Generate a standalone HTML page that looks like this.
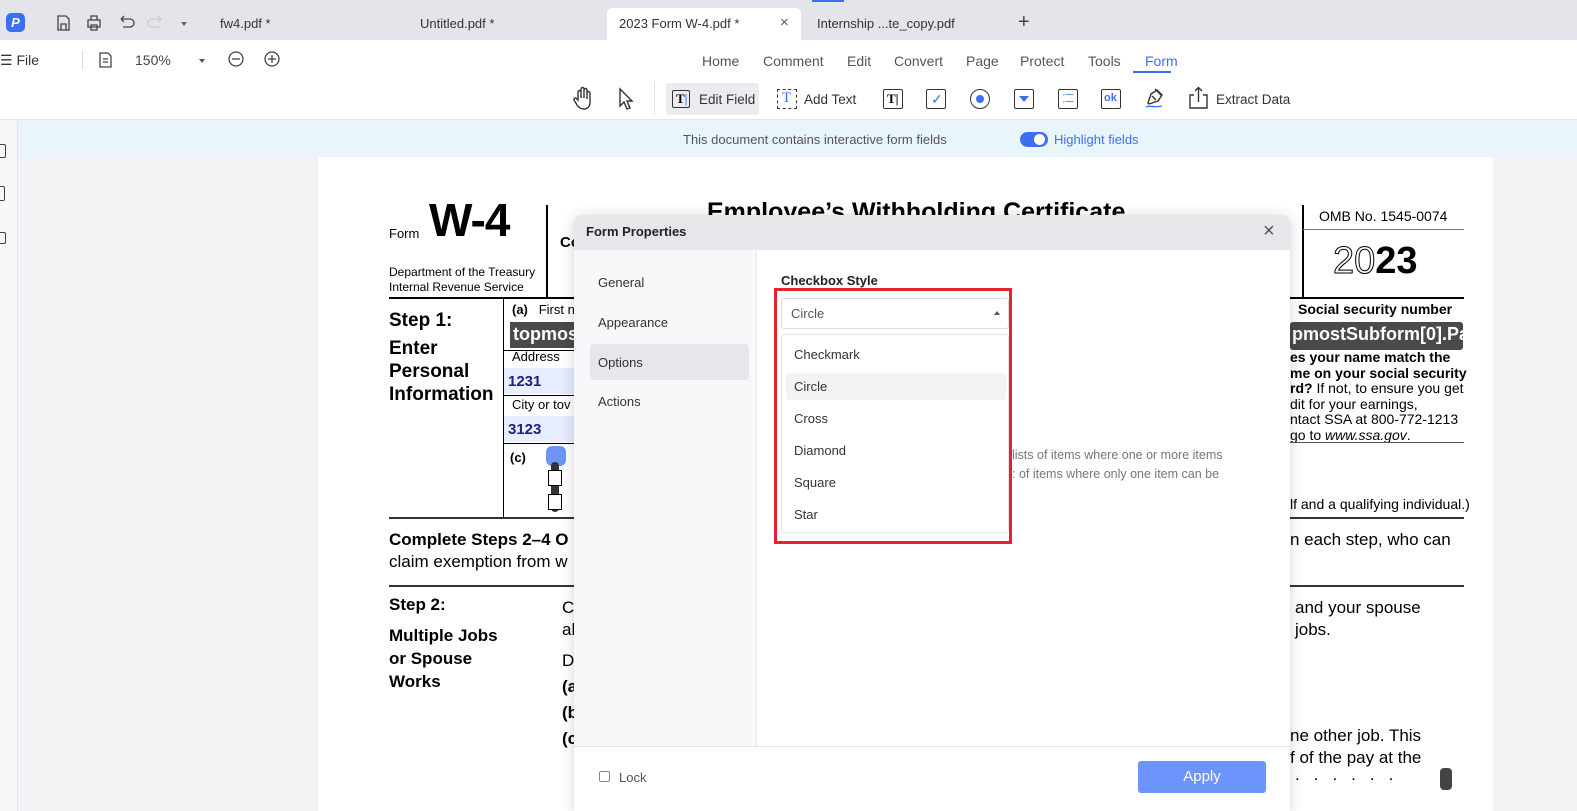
<!DOCTYPE html>
<html><head><meta charset="utf-8"><style>
*{margin:0;padding:0;box-sizing:border-box}
body{width:1577px;height:811px;overflow:hidden;position:relative;font-family:"Liberation Sans",sans-serif;background:#f2f3f5;color:#333}
.a{position:absolute}
.t{font-size:13px;color:#333;white-space:nowrap}
.pd{font-family:"Liberation Sans",sans-serif;color:#000;white-space:nowrap}
.ic{position:absolute;border:1.6px solid #333;border-radius:2px}
</style></head><body>
<!-- tab bar -->
<div class="a" style="left:0;top:0;width:1577px;height:40px;background:#e4e5ea"></div>
<div class="a" style="left:6px;top:13px;width:19px;height:19px;background:#3d6ff5;border-radius:5px;color:#fff;font-size:13px;font-style:italic;font-weight:bold;text-align:center;line-height:19px">P</div>
<svg class="a" style="left:55px;top:14px" width="140" height="18" fill="none" stroke="#444" stroke-width="1.3">
<path d="M3 2h8l3 3v11H3z M6 10h5v6H6z"/>
<path d="M33 6h12v7H33z M36 6V2h6v4 M36 11h6v5h-6z"/>
<path d="M66 5h9a4 4 0 010 8h-7 M66 5l3-3 M66 5l3 3"/>
<path stroke="#ccc" d="M106 5h-9a4 4 0 000 8h7 M106 5l-3-3 M106 5l-3 3"/>
<path fill="#666" stroke="none" d="M126 8h6l-3 4z"/>
</svg>
<div class="a t" style="left:220px;top:16px">fw4.pdf *</div>
<div class="a t" style="left:420px;top:16px">Untitled.pdf *</div>
<div class="a" style="left:607px;top:8px;width:194px;height:32px;background:#fff;border-radius:6px 6px 0 0"></div>
<div class="a t" style="left:619px;top:16px">2023 Form W-4.pdf *</div>
<div class="a t" style="left:780px;top:14px;font-size:15px;color:#555">×</div>
<div class="a" style="left:812px;top:8px;width:190px;height:32px;background:#e4e5ea;border-radius:6px 6px 0 0"></div>
<div class="a t" style="left:817px;top:16px">Internship ...te_copy.pdf</div>
<div class="a t" style="left:1018px;top:11px;font-size:20px;color:#444">+</div>
<div class="a" style="left:812px;top:0;width:32px;height:2px;background:#3d6ff5"></div>
<!-- toolbar -->
<div class="a" style="left:0;top:40px;width:1577px;height:80px;background:#fff;border-bottom:1px solid #e3e4e8"></div>
<div class="a t" style="left:0;top:52px;font-size:14px">☰ File</div>
<div class="a" style="left:82px;top:50px;width:1px;height:20px;background:#ddd"></div>
<svg class="a" style="left:98px;top:51px" width="190" height="18" fill="none" stroke="#444" stroke-width="1.3">
<path d="M2 2h8l3 3v11H2z M5 8h5 M5 11h5"/>
<path fill="#555" stroke="none" d="M101 8h6l-3 4z"/>
<circle cx="138" cy="8" r="7"/><path d="M134 8h8"/>
<circle cx="174" cy="8" r="7"/><path d="M170 8h8 M174 4v8"/>
</svg>
<div class="a t" style="left:135px;top:52px;font-size:14px;color:#444">150%</div>
<div class="a t" style="left:702px;top:53px;font-size:14px;color:#555">Home</div>
<div class="a t" style="left:763px;top:53px;font-size:14px;color:#555">Comment</div>
<div class="a t" style="left:847px;top:53px;font-size:14px;color:#555">Edit</div>
<div class="a t" style="left:894px;top:53px;font-size:14px;color:#555">Convert</div>
<div class="a t" style="left:966px;top:53px;font-size:14px;color:#555">Page</div>
<div class="a t" style="left:1020px;top:53px;font-size:14px;color:#555">Protect</div>
<div class="a t" style="left:1088px;top:53px;font-size:14px;color:#555">Tools</div>
<div class="a t" style="left:1145px;top:53px;font-size:14px;color:#3d6ff5">Form</div>
<div class="a" style="left:1133px;top:71px;width:38px;height:2px;background:#3d6ff5"></div>
<!-- tools row 2 -->
<svg class="a" style="left:572px;top:86px" width="70" height="26" fill="none" stroke="#333" stroke-width="1.4">
<path d="M6 14V6a1.5 1.5 0 013 0v6V3a1.5 1.5 0 013 0v9V4a1.5 1.5 0 013 0v9V7a1.5 1.5 0 013 0v9c0 5-3 7-6 7s-5-1-7-4l-3-5a1.5 1.5 0 012.5-1.5z"/>
<path d="M48 3l0 17 4-4 3 7 3-1-3-7h5z"/>
</svg>
<div class="a" style="left:654px;top:82px;width:1px;height:32px;background:#e0e0e0"></div>
<div class="a" style="left:666px;top:83px;width:93px;height:32px;background:#ebecef;border-radius:3px"></div>
<div class="ic" style="left:672px;top:90px;width:18px;height:18px"></div>
<div class="a pd" style="left:676px;top:91px;font-size:13px;font-weight:bold;font-family:'Liberation Serif',serif">T<span style="color:#3d6ff5">|</span></div>
<div class="a t" style="left:699px;top:92px;font-size:13.5px">Edit Field</div>
<div class="a" style="left:777px;top:89px;width:20px;height:20px;border:1.5px dashed #333"></div>
<div class="a pd" style="left:782px;top:90px;font-size:15px;color:#3d6ff5;font-family:'Liberation Serif',serif">T</div>
<div class="a t" style="left:804px;top:92px;font-size:13.5px">Add Text</div>
<div class="ic" style="left:883px;top:89px;width:20px;height:20px"></div>
<div class="a pd" style="left:887px;top:91px;font-size:13px;font-weight:bold;font-family:'Liberation Serif',serif">T|</div>
<div class="ic" style="left:926px;top:89px;width:20px;height:20px"></div>
<div class="a" style="left:931px;top:91px;color:#3d6ff5;font-size:14px">✓</div>
<div class="a" style="left:970px;top:89px;width:20px;height:20px;border:1.6px solid #333;border-radius:50%"></div>
<div class="a" style="left:976px;top:95px;width:8px;height:8px;background:#3d6ff5;border-radius:50%"></div>
<div class="ic" style="left:1014px;top:89px;width:20px;height:20px"></div>
<div class="a" style="left:1019px;top:96px;width:0;height:0;border-left:5px solid transparent;border-right:5px solid transparent;border-top:6px solid #3d6ff5"></div>
<div class="ic" style="left:1058px;top:89px;width:20px;height:20px"></div>
<div class="a" style="left:1062px;top:92px;font-size:11px;color:#3d6ff5;line-height:7px">·─<br>·─</div>
<div class="ic" style="left:1101px;top:89px;width:20px;height:20px"></div>
<div class="a" style="left:1104px;top:92px;font-size:11px;color:#3d6ff5;font-weight:bold">ok</div>
<svg class="a" style="left:1144px;top:86px" width="22" height="24" fill="none" stroke="#333" stroke-width="1.4"><path d="M4 17l3-9 6-4 5 5-4 6-9 3z M8 10l4 4 M11 3l7 7"/><path stroke="#3d6ff5" d="M2 21c4-2 7 1 16-1"/></svg>
<svg class="a" style="left:1187px;top:86px" width="24" height="24" fill="none" stroke="#333" stroke-width="1.4"><path d="M7 9H3v13h17V9h-4 M11.5 16V2 M8 5l3.5-3.5L15 5"/></svg>
<div class="a t" style="left:1216px;top:92px;font-size:13.5px">Extract Data</div>
<!-- left sidebar -->
<div class="a" style="left:0;top:121px;width:18px;height:690px;background:#f6f7f9;border-right:1px solid #e3e4e8"></div>
<div class="a" style="left:-6px;top:144px;width:12px;height:14px;border:1.3px solid #444;border-radius:2px"></div>
<div class="a" style="left:-6px;top:186px;width:11px;height:15px;border:1.3px solid #444;border-radius:2px"></div>
<div class="a" style="left:-6px;top:232px;width:12px;height:12px;border:1.3px solid #444;border-radius:2px"></div>
<!-- info bar -->
<div class="a" style="left:19px;top:121px;width:1558px;height:36px;background:#e8f5fb"></div>
<div class="a t" style="left:683px;top:132px;color:#555">This document contains interactive form fields</div>
<div class="a" style="left:1020px;top:132px;width:28px;height:15px;background:#3d6ff5;border-radius:8px"></div>
<div class="a" style="left:1034px;top:134px;width:11px;height:11px;background:#fff;border-radius:50%"></div>
<div class="a t" style="left:1054px;top:132px;color:#3d6ff5">Highlight fields</div>
<!-- page -->
<div class="a" style="left:318px;top:157px;width:1175px;height:654px;background:#fff"></div>
<div class="a pd" style="left:389px;top:226px;font-size:13px">Form</div>
<div class="a pd" style="left:429px;top:193px;font-size:46px;font-weight:900;letter-spacing:-1px">W-4</div>
<div class="a pd" style="left:389px;top:265px;font-size:12px;line-height:15px">Department of the Treasury<br>Internal Revenue Service</div>
<div class="a" style="left:546px;top:205px;width:2px;height:92px;background:#000"></div>
<div class="a pd" style="left:560px;top:234px;font-size:15px;font-weight:bold">Co</div>
<div class="a pd" style="left:707px;top:198px;font-size:25px;font-weight:bold">Employee’s Withholding Certificate</div>
<div class="a" style="left:389px;top:297px;width:1075px;height:2px;background:#000"></div>
<div class="a" style="left:1302px;top:205px;width:2px;height:92px;background:#000"></div>
<div class="a pd" style="left:1319px;top:208px;font-size:14px">OMB No. 1545-0074</div>
<div class="a" style="left:1303px;top:229px;width:161px;height:1px;background:#777"></div>
<div class="a pd" style="left:1333px;top:240px;font-size:38px;font-weight:900"><span style="color:#fff;-webkit-text-stroke:1px #000;font-weight:normal">20</span>23</div>
<div class="a pd" style="left:1298px;top:301px;font-size:14px;font-weight:bold">Social security number</div>
<div class="a" style="left:1290px;top:322px;width:173px;height:28px;background:#4a4a4a;border-radius:3px"></div>
<div class="a pd" style="left:1292px;top:324px;font-size:18px;font-weight:bold;color:#fff">pmostSubform[0].Pa</div>
<div class="a pd" style="left:1290px;top:350px;font-size:14px;line-height:15.5px">
<b>es your name match the</b><br><b>me on your social security</b><br><b>rd?</b> If not, to ensure you get<br>dit for your earnings,<br>ntact SSA at 800-772-1213<br>go to <i>www.ssa.gov</i>.</div>
<div class="a" style="left:1290px;top:442px;width:174px;height:1px;background:#555"></div>
<div class="a pd" style="left:1290px;top:496px;font-size:14px">lf and a qualifying individual.)</div>
<div class="a" style="left:389px;top:517px;width:1075px;height:2px;background:#333"></div>
<div class="a pd" style="left:389px;top:310px;font-size:19px;font-weight:bold">Step 1:</div>
<div class="a pd" style="left:389px;top:337px;font-size:19px;font-weight:bold;line-height:23px">Enter<br>Personal<br>Information</div>
<div class="a" style="left:503px;top:298px;width:1px;height:219px;background:#000"></div>
<div class="a pd" style="left:512px;top:302px;font-size:13px"><b>(a)</b>&nbsp;&nbsp; First n</div>
<div class="a" style="left:510px;top:322px;width:70px;height:26px;background:#4a4a4a"></div>
<div class="a pd" style="left:513px;top:324px;font-size:18px;font-weight:bold;color:#fff">topmos</div>
<div class="a" style="left:504px;top:350px;width:80px;height:1px;background:#000"></div>
<div class="a pd" style="left:512px;top:349px;font-size:13px">Address</div>
<div class="a" style="left:504px;top:368px;width:80px;height:26px;background:#e8eeff"></div>
<div class="a pd" style="left:508px;top:373px;font-size:15px;font-weight:bold;color:#1a237e">1231</div>
<div class="a" style="left:504px;top:395px;width:80px;height:1px;background:#000"></div>
<div class="a pd" style="left:512px;top:397px;font-size:13px">City or tov</div>
<div class="a" style="left:504px;top:416px;width:80px;height:26px;background:#e8eeff"></div>
<div class="a pd" style="left:508px;top:421px;font-size:15px;font-weight:bold;color:#1a237e">3123</div>
<div class="a" style="left:504px;top:443px;width:80px;height:1px;background:#000"></div>
<div class="a pd" style="left:510px;top:450px;font-size:13px;font-weight:bold">(c)</div>
<div class="a" style="left:546px;top:446px;width:20px;height:20px;background:#6e95f5;border-radius:6px"></div>
<div class="a" style="left:551px;top:462px;width:8px;height:50px;background:#333;border-radius:4px"></div>
<div class="a" style="left:548px;top:470px;width:14px;height:16px;border:1px solid #000;background:#fff"></div>
<div class="a" style="left:548px;top:494px;width:14px;height:16px;border:1px solid #000;background:#fff"></div>
<div class="a pd" style="left:389px;top:530px;font-size:17px;font-weight:bold">Complete Steps 2–4 O</div>
<div class="a pd" style="left:389px;top:552px;font-size:17px">claim exemption from w</div>
<div class="a pd" style="left:1290px;top:530px;font-size:17px">n each step, who can</div>
<div class="a" style="left:389px;top:585px;width:1075px;height:2px;background:#333"></div>
<div class="a pd" style="left:389px;top:595px;font-size:17px;font-weight:bold">Step 2:</div>
<div class="a pd" style="left:389px;top:624px;font-size:17px;font-weight:bold;line-height:23px">Multiple Jobs<br>or Spouse<br>Works</div>
<div class="a pd" style="left:562px;top:597px;font-size:17px;line-height:22px">C<br>al</div>
<div class="a pd" style="left:562px;top:648px;font-size:17px;line-height:26px">D<br><b>(a<br>(b<br>(c</b></div>
<div class="a pd" style="left:1295px;top:597px;font-size:17px;line-height:22px">and your spouse<br>jobs.</div>
<div class="a pd" style="left:1290px;top:725px;font-size:17px;line-height:22px">ne other job. This<br>f of the pay at the</div>
<div class="a pd" style="left:1295px;top:765px;font-size:17px;letter-spacing:14px">......</div>
<div class="a" style="left:1440px;top:768px;width:12px;height:22px;background:#444;border-radius:4px"></div>
<!-- dialog -->
<div class="a" style="left:574px;top:215px;width:716px;height:596px;background:#fff;border-radius:8px 8px 0 0;box-shadow:0 2px 14px rgba(0,0,0,.18);overflow:hidden">
<div class="a" style="left:0;top:0;width:716px;height:35px;background:#e6e7eb"></div>
<div class="a" style="left:12px;top:9px;font-size:13px;font-weight:bold;color:#222">Form Properties</div>
<div class="a" style="left:689px;top:5px;font-size:20px;color:#555">×</div>
<div class="a" style="left:0;top:35px;width:183px;height:496px;background:#f7f8fa;border-right:1px solid #e8e9ec"></div>
<div class="a t" style="left:24px;top:60px">General</div>
<div class="a t" style="left:24px;top:100px">Appearance</div>
<div class="a" style="left:16px;top:129px;width:159px;height:36px;background:#e6e7eb;border-radius:4px"></div>
<div class="a t" style="left:24px;top:140px">Options</div>
<div class="a t" style="left:24px;top:179px">Actions</div>
<div class="a" style="left:207px;top:58px;font-size:13px;font-weight:bold;color:#222">Checkbox Style</div>
<div class="a" style="left:207px;top:83px;width:228px;height:31px;border:1px solid #dcdde1;border-radius:3px"></div>
<div class="a t" style="left:217px;top:91px;color:#555">Circle</div>
<div class="a" style="left:420px;top:96px;width:0;height:0;border-left:3px solid transparent;border-right:3px solid transparent;border-bottom:4px solid #555"></div>
<div class="a" style="left:207px;top:119px;width:228px;height:199px;border:1px solid #e3e4e8;border-radius:3px;background:#fff"></div>
<div class="a" style="left:212px;top:158px;width:220px;height:27px;background:#f2f3f5;border-radius:3px"></div>
<div class="a t" style="left:220px;top:132px">Checkmark</div>
<div class="a t" style="left:220px;top:164px">Circle</div>
<div class="a t" style="left:220px;top:196px">Cross</div>
<div class="a t" style="left:220px;top:228px">Diamond</div>
<div class="a t" style="left:220px;top:260px">Square</div>
<div class="a t" style="left:220px;top:292px">Star</div>
<div class="a" style="left:200px;top:73px;width:238px;height:256px;border:3px solid #e8212f"></div>
<div class="a t" style="left:438px;top:231px;color:#777;font-size:12.5px;line-height:19px">lists of items where one or more items<br>: of items where only one item can be</div>
<div class="a" style="left:0;top:531px;width:716px;height:1px;background:#e3e4e8"></div>
<div class="a" style="left:25px;top:556px;width:11px;height:11px;border:1px solid #888;border-radius:2px"></div>
<div class="a t" style="left:45px;top:555px;color:#555">Lock</div>
<div class="a" style="left:564px;top:546px;width:128px;height:32px;background:#6b95fc;border-radius:3px;color:#fff;font-size:15px;text-align:center;line-height:32px">Apply</div>
</div>
<div class="a" style="left:1493px;top:157px;width:84px;height:654px;background:#f2f3f5"></div>
</body></html>
